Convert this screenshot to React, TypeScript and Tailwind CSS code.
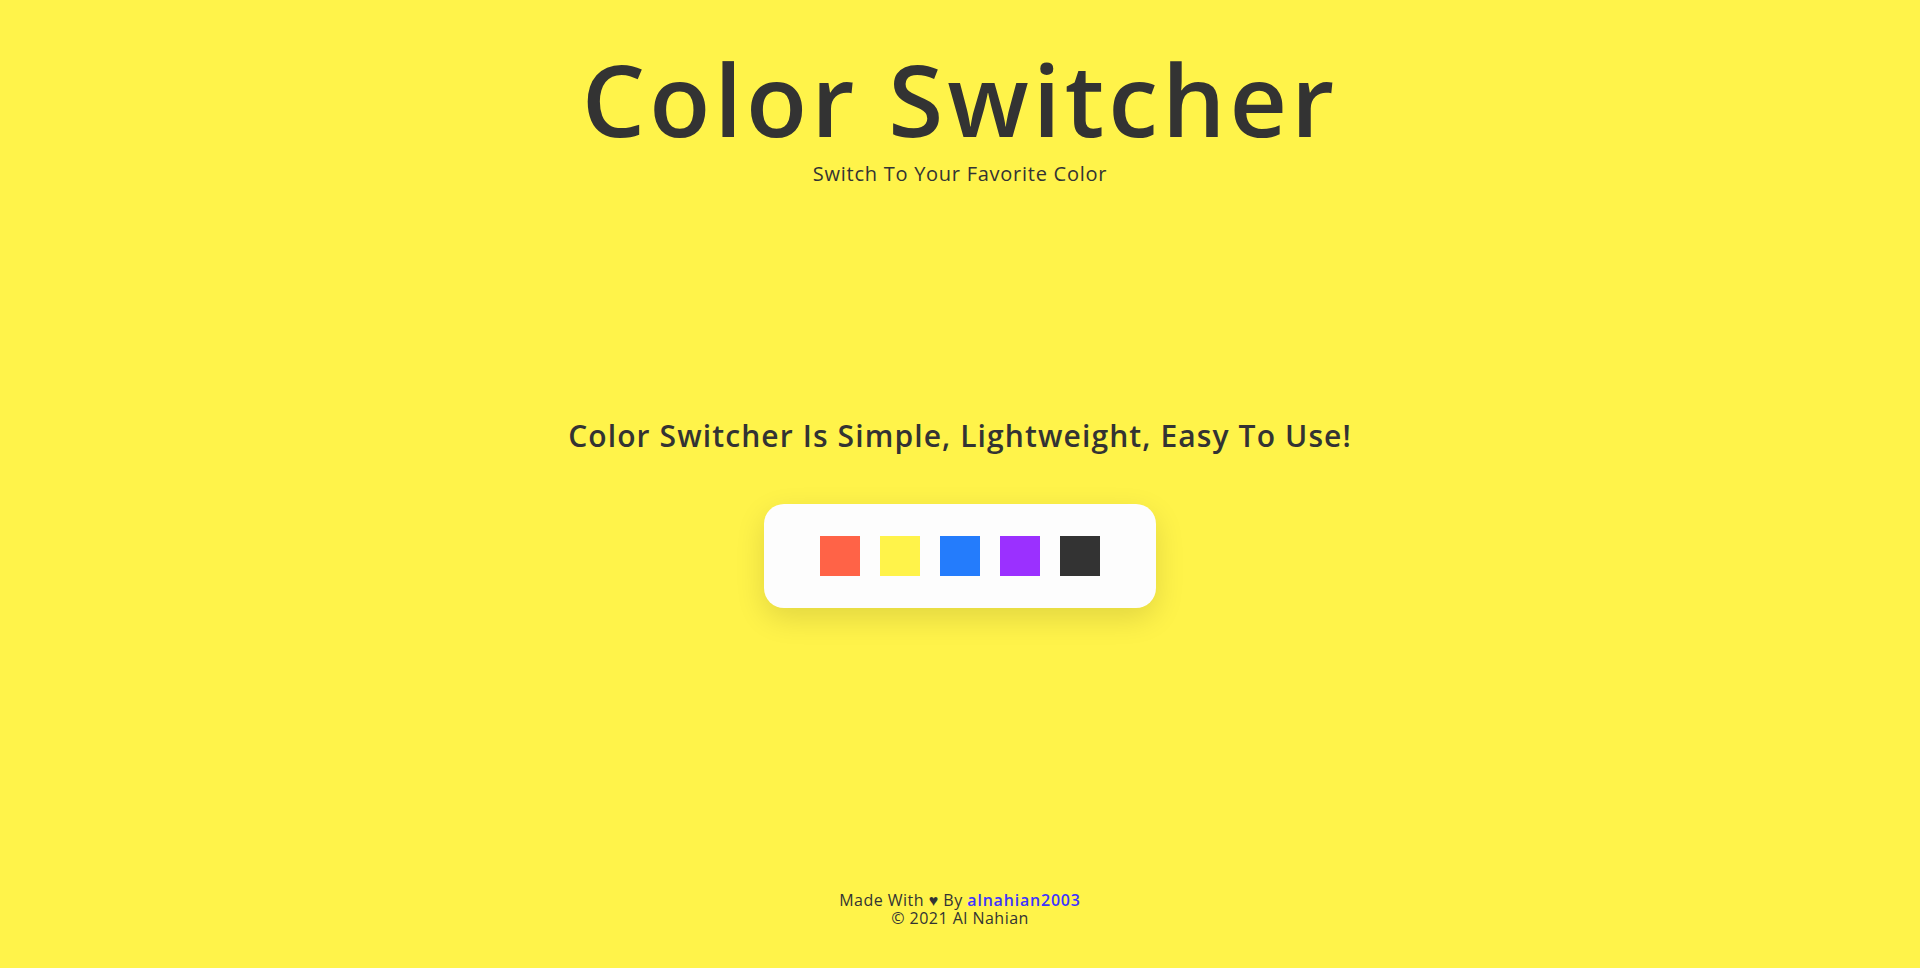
import React from "react";

const swatches = ["#ff6347", "#fff34a", "#247cfc", "#9b30ff", "#333333"];

export default function App() {
  return (
    <div
      className="h-screen w-full bg-[#fff34a] text-[#333333] flex flex-col items-center overflow-hidden"
      style={{ fontFamily: '"Open Sans", "Noto Sans", sans-serif' }}
    >
      <header className="pt-[43px] flex flex-col items-center text-center">
        <h1 className="text-[100px] leading-[110px] font-semibold tracking-[0.04em]">
          Color Switcher
        </h1>
        <p className="mt-[9px] text-[20px] leading-[24px] font-medium tracking-[0.037em]">
          Switch To Your Favorite Color
        </p>
      </header>

      <main className="mt-[232px] flex flex-col items-center">
        <h2 className="text-[30px] leading-[36px] font-semibold tracking-[0.037em]">
          Color Switcher Is Simple, Lightweight, Easy To Use!
        </h2>
        <div className="mt-[50px] flex gap-[20px] px-[56px] py-[32px] bg-[#fdfdfd] rounded-[20px] shadow-[0_10px_30px_rgba(0,0,0,0.12)]">
          {swatches.map((c) => (
            <button
              key={c}
              className="w-[40px] h-[40px] cursor-pointer"
              style={{ backgroundColor: c }}
              aria-label={c}
            />
          ))}
        </div>
      </main>

      <footer className="mt-auto pb-[41px] text-center text-[16px] leading-[18px] tracking-[0.03em] text-[#333333]">
        <p>
          Made With <span className="leading-none">♥</span> By{" "}
          <a href="#" className="font-semibold tracking-[0.05em] text-[#3d33ff]">
            alnahian2003
          </a>
        </p>
        <p>© 2021 Al Nahian</p>
      </footer>
    </div>
  );
}
